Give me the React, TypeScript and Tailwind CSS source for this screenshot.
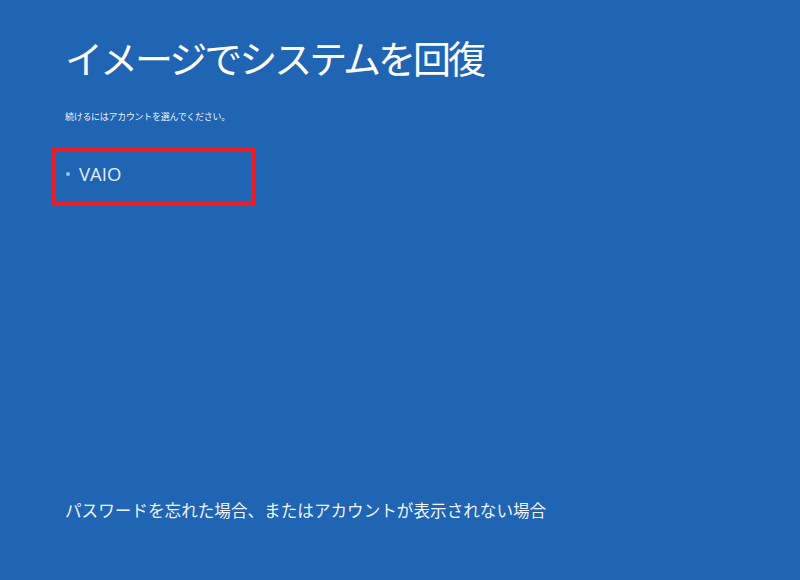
export default function App() {
  return (
    <div
      className="flex h-[580px] w-[800px] flex-col bg-[#2064b4] pl-[65px] text-white"
      style={{ fontFamily: '"Noto Sans CJK JP", "Noto Sans", sans-serif' }}
    >
      <h1 className="mt-[32px] text-[38px] leading-[50px] font-normal tracking-[-3px]">
        イメージでシステムを回復
      </h1>
      <p className="mt-[29px] text-[9px] leading-[12px] tracking-[-0.3px] text-white/95">
        続けるにはアカウントを選んでください。
      </p>

      <div className="ml-[-13px] mt-[25px] flex h-[57px] w-[203px] items-center border-4 border-[#ed1c24] pb-[5px] pl-[10px]">
        <span className="h-[4px] w-[4px] rounded-full bg-[#8cc8f0]" />
        <span className="ml-[9px] text-[18.5px] leading-none text-[#e3ecf7]" style={{ fontFamily: '"Open Sans", "Noto Sans", sans-serif' }}>
          VAIO
        </span>
      </div>

      <p className="mt-auto mb-[58px] text-[16.6px] leading-[24px] text-white/95">
        パスワードを忘れた場合、またはアカウントが表示されない場合
      </p>
    </div>
  );
}
